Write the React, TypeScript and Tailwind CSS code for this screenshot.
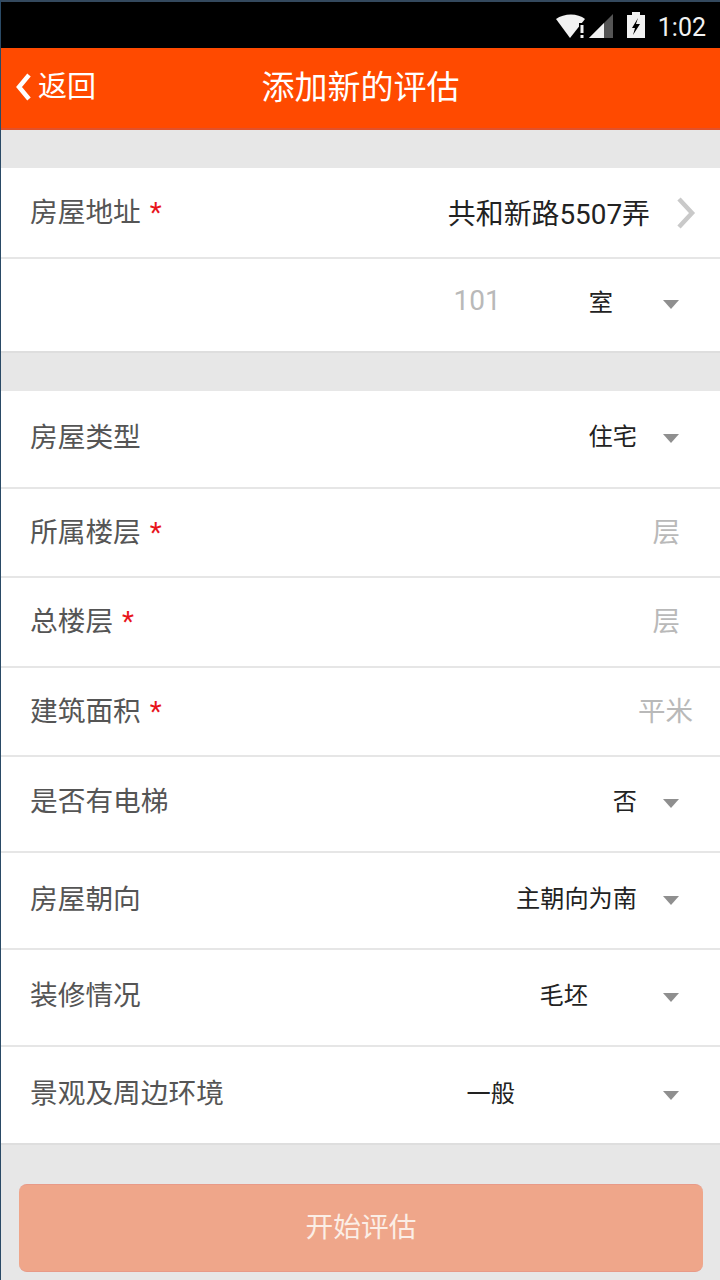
const font = { fontFamily: '"Roboto", "Noto Sans CJK SC", sans-serif' };

function Caret() {
  return (
    <svg width="16" height="9" viewBox="0 0 16 9" className="shrink-0 mt-[3px]">
      <path d="M0 0H16L8 9Z" fill="#8f8f8f" />
    </svg>
  );
}

function Label({ text, star }: { text: string; star?: boolean }) {
  return (
    <span className="text-[27.7px] leading-none text-[#555555] whitespace-nowrap">
      {text}
      {star && <span className="text-[#e8141c] ml-[9px]">*</span>}
    </span>
  );
}

function Row({
  h,
  label,
  star,
  children,
  last,
}: {
  h: string;
  label?: string;
  star?: boolean;
  children?: React.ReactNode;
  last?: boolean;
}) {
  return (
    <div className={`flex items-center justify-between pl-[29px] bg-white border-b-[2px] ${last ? "border-[#dedede]" : "border-[#e6e6e6]"} ${h}`}>
      {label ? <Label text={label} star={star} /> : <span />}
      {children}
    </div>
  );
}

function Select({ value, right }: { value: string; right: string }) {
  return (
    <div className="flex items-center pr-[41px]">
      <span className={`text-[24.2px] leading-none text-[#222222] whitespace-nowrap ${right}`}>{value}</span>
      <Caret />
    </div>
  );
}

function Unit({ text, pr }: { text: string; pr: string }) {
  return <span className={`text-[27.5px] leading-none text-[#b9b9b9] whitespace-nowrap ${pr}`}>{text}</span>;
}

export default function App() {
  return (
    <div style={font} className="w-[720px] h-[1280px] overflow-hidden bg-[#e7e7e7] border-l border-[#2a4a66] flex flex-col">
      <div className="h-[48px] bg-black border-t-2 border-[#34495e] flex items-center justify-end pr-[14px] shrink-0">
        <svg width="30" height="25" viewBox="0 0 30 25" className="mt-[3px]">
          <path d="M0 5C8 -1 22 -1 29 5L14 24Z" fill="#f2f2f2" />
          <rect x="23" y="9" width="7" height="16" fill="#000" />
          <rect x="24.5" y="11" width="3" height="8" fill="#f2f2f2" />
          <rect x="24.5" y="21" width="3" height="3" fill="#f2f2f2" />
        </svg>
        <svg width="24" height="26" viewBox="0 0 24 26" className="ml-[3px] mt-[2px]">
          <path d="M0 25L24 1V25Z" fill="#555555" />
          <path d="M0 25L15 10V25Z" fill="#f2f2f2" />
        </svg>
        <svg width="18" height="26" viewBox="0 0 18 26" className="ml-[14px]">
          <path d="M5 0H13V3H18V26H0V3H5Z" fill="#f2f2f2" />
          <path d="M11 6L5 16H8L6 23L13 12H9L11 6Z" fill="#000" />
        </svg>
        <span className="ml-[13px] mt-[4px] text-[25px] leading-none text-[#f2f2f2]">1:02</span>
      </div>

      <div className="relative h-[82px] bg-[#ff4a00] border-b-2 border-[#e2512a] flex items-center justify-center shrink-0">
        <div className="absolute left-[14px] top-[23px] flex items-center text-white">
          <svg width="17" height="30" viewBox="0 0 17 30">
            <path d="M14 3L4 15L14 27" fill="none" stroke="#fff" strokeWidth="4.5" />
          </svg>
          <span className="ml-[6px] text-[29px] leading-none mt-[2px]">返回</span>
        </div>
        <span className="text-[33px] leading-none text-white pb-[2px]">添加新的评估</span>
      </div>

      <div className="h-[38px] shrink-0" />

      <div className="shrink-0">
        <Row h="h-[91px]" label="房屋地址" star>
          <div className="flex items-center pr-[24px]">
            <span className="text-[27.9px] leading-none mt-[5px] text-[#222222] whitespace-nowrap mr-[26px]">共和新路5507弄</span>
            <svg width="20" height="34" viewBox="0 0 20 34">
              <path d="M3 3L16 17L3 31" fill="none" stroke="#c9c9c9" strokeWidth="4.5" />
            </svg>
          </div>
        </Row>
        <Row h="h-[94px]" last>
          <div className="flex items-center pr-[41px] pb-[3px]">
            <span className="text-[28px] leading-none text-[#b9b9b9] mr-[88px] -mb-[1px] -mt-[6px]">101</span>
            <span className="text-[24.2px] leading-none text-[#222222] mr-[50px]">室</span>
            <Caret />
          </div>
        </Row>
      </div>

      <div className="h-[38px] shrink-0" />

      <div className="shrink-0">
        <Row h="h-[98px] pb-[3px]" label="房屋类型"><Select value="住宅" right="mr-[26px]" /></Row>
        <Row h="h-[89px]" label="所属楼层" star><Unit text="层" pr="pr-[40px]" /></Row>
        <Row h="h-[90px]" label="总楼层" star><Unit text="层" pr="pr-[40px]" /></Row>
        <Row h="h-[89px]" label="建筑面积" star><Unit text="平米" pr="pr-[27px]" /></Row>
        <Row h="h-[96px] pb-[4px]" label="是否有电梯"><Select value="否" right="mr-[26px]" /></Row>
        <Row h="h-[97px] pb-[2px]" label="房屋朝向"><Select value="主朝向为南" right="mr-[26px]" /></Row>
        <Row h="h-[97px] pb-[3px]" label="装修情况"><Select value="毛坯" right="mr-[75px]" /></Row>
        <Row h="h-[98px] pb-[2px]" label="景观及周边环境" last><Select value="一般" right="mr-[148px]" /></Row>
      </div>

      <div className="pt-[39px] pl-[18px] pr-[17px] shrink-0">
        <button className="w-full h-[88px] rounded-[8px] bg-[#efa68a] border-y border-[#e89a88] text-[27.7px] leading-none text-[#fbeee6]">
          开始评估
        </button>
      </div>
    </div>
  );
}
